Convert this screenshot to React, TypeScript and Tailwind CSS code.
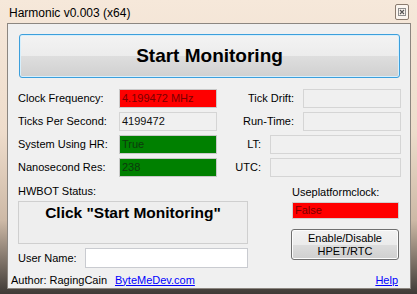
import React from "react";

const font = "font-['Liberation_Sans',Arial,sans-serif]";

interface FieldProps {
  value?: string;
  tone?: "red" | "green" | "plain";
  className?: string;
}

const Field: React.FC<FieldProps> = ({ value = "", tone = "plain", className = "" }) => {
  const toneClass =
    tone === "red"
      ? "bg-[#ff0000] border-[#c8c8c8] text-[#7a0000]"
      : tone === "green"
      ? "bg-[#008000] border-[#c8c8c8] text-[#0d3a0d]"
      : "bg-[#f0f0f0] border-[#d5d5d5] text-[#111]";
  return (
    <div
      className={`h-[19px] border flex items-center pl-[2px] text-[11px] leading-none ${toneClass} ${className}`}
    >
      {value}
    </div>
  );
};

interface RowProps {
  label: string;
  value: string;
  tone?: "red" | "green" | "plain";
  rightLabel: string;
  wide?: boolean;
}

const Row: React.FC<RowProps> = ({ label, value, tone, rightLabel, wide }) => (
  <div className="flex items-center h-[19px] pl-[10px] pr-[9px]">
    <div className="w-[101px] text-[11px] leading-none">{label}</div>
    <Field value={value} tone={tone} className="w-[98px]" />
    <div className="flex-1 flex items-center justify-end gap-[9px]">
      <span className="text-[11px] leading-none">{rightLabel}</span>
      <Field className={wide ? "w-[131px]" : "w-[98px]"} />
    </div>
  </div>
);

const App: React.FC = () => {
  return (
    <div
      className={`${font} w-[417px] h-[294px] overflow-hidden relative text-black bg-[linear-gradient(#f6e8da_0%,#eedccb_45%,#cdb9a6_75%,#3f3a36_100%)] pt-[23px] pl-[7px] pr-[6px] pb-[5px]`}
    >
      {/* title bar */}
      <div className="absolute left-[9px] top-[6px] text-[12px] leading-[14px] text-black">
        Harmonic v0.003 (x64)
      </div>
      <div className="absolute left-[395px] top-[4px] w-[14px] h-[16px] border border-[#8a7b6e] rounded-[2px] bg-[#fbf5ef] flex items-center justify-center">
        <svg width="8" height="8" viewBox="0 0 8 8">
          <rect x="0.5" y="0.5" width="7" height="7" fill="none" stroke="#8d8d8d" strokeWidth="1" />
          <path d="M2 2 L6 6 M6 2 L2 6" stroke="#555" strokeWidth="1.2" />
        </svg>
      </div>

      {/* client area */}
      <div className="h-[266px] border border-[#8c8680] bg-[#f0f0f0] flex flex-col">
        <button className="mt-[10px] ml-[11px] mr-[10px] h-[44px] rounded-[3px] border border-[#3c9fdc] shadow-[inset_0_0_0_1px_#d6effc] bg-[linear-gradient(#f3f3f3_0%,#ececec_50%,#dedede_50%,#d0d0d0_100%)] text-[19px] font-bold text-black">
          Start Monitoring
        </button>

        <div className="mt-[11px] flex flex-col gap-[4px]">
          <Row label="Clock Frequency:" value="4.199472 MHz" tone="red" rightLabel="Tick Drift:" />
          <Row label="Ticks Per Second:" value="4199472" rightLabel="Run-Time:" />
          <Row label="System Using HR:" value="True" tone="green" rightLabel="LT:" wide />
          <Row label="Nanosecond Res:" value="238" tone="green" rightLabel="UTC:" wide />
        </div>

        <div className="mt-[7px] flex items-start pl-[10px]">
          {/* left column */}
          <div className="w-[230px] flex flex-col">
            <div className="h-[14px] text-[11px] leading-[14px]">HWBOT Status:</div>
            <div className="mt-[3px] h-[43px] border border-[#cfcfcf] bg-[#eeeeee] text-center pt-[2px] text-[15.5px] font-bold leading-[18px]">
              Click "Start Monitoring"
            </div>
            <div className="mt-[4px] flex items-center h-[20px]">
              <span className="w-[67px] text-[11px] leading-none">User Name:</span>
              <div className="flex-1 h-[20px] border border-[#c9cbd0] bg-white" />
            </div>
          </div>

          {/* right column */}
          <div className="ml-[43px] w-[108px] flex flex-col pt-[1px]">
            <div className="h-[14px] text-[11px] leading-[14px] pl-[1px]">Useplatformclock:</div>
            <div className="mt-[3px] h-[17px] bg-[#ff0000] border border-[#d0d0d0] text-[#7a0000] text-[11px] leading-none flex items-center pl-[2px] ml-[1px]">
              False
            </div>
            <button className="mt-[10px] h-[31px] rounded-[3px] border border-[#707070] bg-[linear-gradient(#f2f2f2_0%,#ebebeb_50%,#dddddd_50%,#cfcfcf_100%)] shadow-[inset_0_0_0_1px_#fcfcfc] text-[11px] leading-[13px] text-black flex flex-col items-center justify-center">
              <span>Enable/Disable</span>
              <span>HPET/RTC</span>
            </button>
          </div>
        </div>

        <div className="mt-[5px] h-[14px] flex items-center text-[11px] leading-none pl-[3px] pr-[12px]">
          <span className="w-[104px]">Author: RagingCain</span>
          <a href="#" className="text-[#0000ff] underline">
            ByteMeDev.com
          </a>
          <a href="#" className="ml-auto text-[#0000ff] underline">
            Help
          </a>
        </div>
      </div>
    </div>
  );
};

export default App;
